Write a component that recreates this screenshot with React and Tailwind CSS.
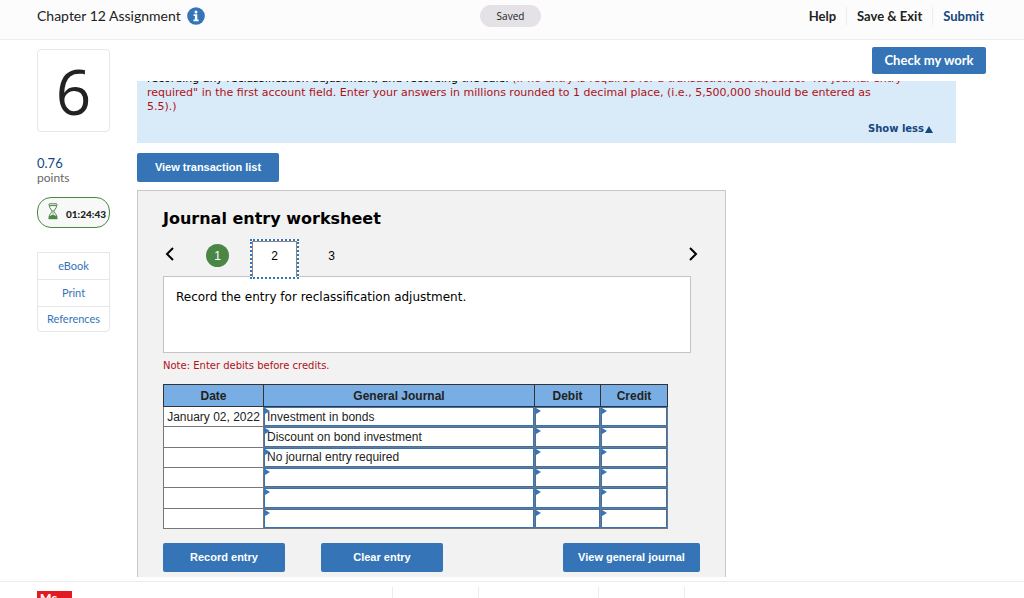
import React from "react";

const rows = [
  { date: "January 02, 2022", account: "Investment in bonds" },
  { date: "", account: "Discount on bond investment" },
  { date: "", account: "No journal entry required" },
  { date: "", account: "" },
  { date: "", account: "" },
  { date: "", account: "" },
];

const sans = "font-['Lato',sans-serif]";
const open = "font-['Open_Sans',sans-serif]";
const verdana = "font-['DejaVu_Sans',sans-serif]";
const arial = "font-['Liberation_Sans',sans-serif]";

function InfoIcon() {
  return (
    <svg viewBox="0 0 18 18" className="size-[18px]" aria-hidden="true">
      <circle cx="9" cy="9" r="8.8" fill="#3474b7" />
      <circle cx="9" cy="5" r="1.5" fill="#fff" />
      <path d="M6.6 7.3h3.7v5.2h1.3v1.7H6.5v-1.7h1.4V9H6.6z" fill="#fff" />
    </svg>
  );
}

function Hourglass() {
  return (
    <svg viewBox="0 0 10 17" className="h-[17px] w-[10px]" fill="none" stroke="#4a8745" aria-hidden="true">
      <rect x="0.8" y="0.8" width="8.4" height="1.8" rx="0.9" />
      <path d="M1.4 2.6c0 3 2.6 4.2 2.6 5.6S1.2 11 1 14.4M8.6 2.6c0 3-2.6 4.2-2.6 5.6s2.8 2.8 3 6.2" />
      <path d="M5 7v4" strokeWidth="0.7" />
      <path d="M0.8 13.4 5 11.4l4.2 2v2.6H0.8z" fill="#4a8745" stroke="none" />
      <path d="M0.5 15.7h9" />
    </svg>
  );
}

function Chevron({ d }) {
  return (
    <svg viewBox="0 0 9 14" className="h-[14px] w-[9px]" fill="none" stroke="#000" strokeWidth="2" aria-hidden="true">
      <path d={d} />
    </svg>
  );
}

function EntryCell({ label, value }) {
  return (
    <td className="relative border border-[#777] bg-white p-0 shadow-[inset_0_0_0_1px_#3474b7]">
      <svg viewBox="0 0 5 6" className="absolute left-px top-px h-[6px] w-[5px]" aria-hidden="true">
        <path d="M0 0l5 3-5 3z" fill="#3474b7" />
      </svg>
      <input
        aria-label={label}
        defaultValue={value}
        className="block h-4 w-full bg-transparent px-[3px] text-[12px] text-[#222] outline-none"
      />
    </td>
  );
}

function BlueButton({ children, className }) {
  return (
    <button className={`rounded-[2px] bg-[#3474b7] text-[11px] font-bold text-white ${arial} ${className}`}>
      {children}
    </button>
  );
}

export default function App() {
  return (
    <div className={`flex h-screen flex-col overflow-hidden bg-white text-[#222] ${sans}`}>
      <header className="grid h-10 shrink-0 grid-cols-[1fr_auto_1fr] items-center border-b border-[#ececec] bg-[#fcfcfc] pb-[7px] pl-[37px] pr-10">
        <div className="flex items-center gap-[6px]">
          <h1 className="text-[14px] leading-5">Chapter 12 Assignment</h1>
          <button aria-label="Assignment information">
            <InfoIcon />
          </button>
        </div>
        <span className={`rounded-full bg-[#e4e2e6] px-[17px] text-[10px] leading-[22px] ${open}`}>Saved</span>
        <nav className="flex items-center justify-end text-[13px] font-bold leading-[18px]">
          <a href="#help" className="border-r border-[#ececec] pr-[10px]">Help</a>
          <a href="#save" className="border-r border-[#ececec] px-[10px]">Save &amp; Exit</a>
          <a href="#submit" className="pl-[10px] text-[#16477f]">Submit</a>
        </nav>
      </header>

      <div className="flex min-h-0 flex-1 pl-[37px]">
        <aside className="w-[73px] shrink-0 pt-[9px]">
          <div className={`flex h-[83px] items-center justify-center rounded border border-[#e6e6e6] text-[62px] leading-none ${open}`}>6</div>
          <div className="pt-[23px] text-[13px] leading-4 text-[#16477f]">0.76</div>
          <div className="text-[12px] leading-[14px] text-[#666]">points</div>
          <div className="mt-3 flex h-[31px] items-center gap-2 rounded-[14px] border border-[#4a8745] bg-[#f7f8f7] pb-[2px] pl-[10px]">
            <Hourglass />
            <span className="pt-[5px] text-[10px] font-black">01:24:43</span>
          </div>
          <nav className="mt-6 rounded-b border border-[#e6e6e6] text-center text-[11px] text-[#3474b7]">
            <a href="#ebook" className="block border-b border-[#e6e6e6] leading-[26px]">eBook</a>
            <a href="#print" className="block border-b border-[#e6e6e6] leading-[26px]">Print</a>
            <a href="#references" className="block leading-[24px]">References</a>
          </nav>
        </aside>

        <main className="ml-[27px] flex min-w-0 flex-1 flex-col pb-1">
          <div className="flex h-[41px] shrink-0 justify-end pr-[38px] pt-[7px]">
            <button className="h-[27px] w-[114px] rounded-[2px] bg-[#3474b7] text-[13px] font-bold text-white">Check my work</button>
          </div>
          <div className="min-h-0 flex-1 overflow-hidden">
            <section className={`mr-[68px] overflow-hidden bg-[#d9eaf9] pl-[10px] pb-[7px] text-[11px] leading-[14px] ${verdana}`}>
              <p className="-mt-[9px] whitespace-nowrap text-[#b01116]">
                <span className="text-black">recording any reclassification adjustment, and recording the sale. </span>
                (If no entry is required for a transaction/event, select "No journal entry
                <br />
                required" in the first account field. Enter your answers in millions rounded to 1 decimal place, (i.e., 5,500,000 should be entered as
                <br />
                5.5).)
              </p>
              <div className="flex justify-end pr-[23px] pt-2">
                <button className="flex items-center gap-px text-[10px] font-bold text-[#16477f]">
                  Show less
                  <svg viewBox="0 0 8 7" className="h-[7px] w-2" aria-hidden="true">
                    <path d="M4 0l4 7H0z" fill="#16477f" />
                  </svg>
                </button>
              </div>
            </section>

            <BlueButton className="mt-[10px] h-[29px] w-[142px]">View transaction list</BlueButton>

            <section className="mt-[8px] w-[589px] max-w-full border border-[#c8c8c8] bg-[#f2f2f2] px-[25px] pb-10 pt-[18px]">
              <h2 className={`text-[16px] font-bold leading-5 text-black ${verdana}`}>Journal entry worksheet</h2>
              <div className="mr-[9px] mt-[10px] flex h-[37px] items-start text-[12px] text-black">
                <button aria-label="Previous entry" className="mt-[8px] ml-[2px]">
                  <Chevron d="M8 1 2 7l6 6" />
                </button>
                <button className={`ml-8 mt-[5px] size-[23px] rounded-full bg-[#4a8745] text-white ${arial}`}>1</button>
                <button className={`relative z-10 ml-[21px] h-10 w-[49px] border-2 border-dotted border-[#3474b7] bg-white pb-[6px] shadow-[inset_1px_1px_0_#888,inset_-1px_0_0_#888] ${arial}`}>2</button>
                <button className={`mt-[5px] h-[23px] w-[65px] ${arial}`}>3</button>
                <button aria-label="Next entry" className="ml-auto mt-[8px] mr-[-7px]">
                  <Chevron d="M1 1l6 6-6 6" />
                </button>
              </div>
              <div className={`mr-[9px] h-[77px] border border-[#c4c4c4] bg-white px-3 pt-3 text-[12px] leading-4 text-black ${verdana}`}>
                Record the entry for reclassification adjustment.
              </div>
              <p className={`mt-[6px] text-[10px] leading-[14px] text-[#b01116] ${verdana}`}>Note: Enter debits before credits.</p>
              <table className={`mt-[11px] h-[145px] w-[505px] table-fixed border-collapse text-[12px] text-[#222] ${arial}`}>
                <colgroup>
                  <col className="w-[100px]" />
                  <col className="w-[271px]" />
                  <col className="w-[66px]" />
                  <col className="w-[67px]" />
                </colgroup>
                <thead>
                  <tr className="h-[22px] bg-[#78aee3]">
                    {["Date", "General Journal", "Debit", "Credit"].map((name) => (
                      <th key={name} scope="col" className="border border-[#333] p-0 font-bold leading-4">{name}</th>
                    ))}
                  </tr>
                </thead>
                <tbody>
                  {rows.map((row, i) => (
                    <tr key={i}>
                      <td className="whitespace-nowrap border border-[#777] bg-white p-0 text-center leading-4">{row.date}</td>
                      <EntryCell label={`Account, row ${i + 1}`} value={row.account} />
                      <EntryCell label={`Debit, row ${i + 1}`} value="" />
                      <EntryCell label={`Credit, row ${i + 1}`} value="" />
                    </tr>
                  ))}
                </tbody>
              </table>
              <div className="mt-[14px] flex">
                <BlueButton className="h-[29px] w-[122px]">Record entry</BlueButton>
                <BlueButton className="ml-9 h-[29px] w-[122px]">Clear entry</BlueButton>
                <BlueButton className="ml-auto h-[29px] w-[137px]">View general journal</BlueButton>
              </div>
            </section>
          </div>
        </main>
      </div>

      <footer className="flex h-[17px] shrink-0 items-start overflow-hidden border-t border-[#ececec] pl-[37px]">
        <div className="w-[355px] shrink-0 pt-[9px]">
          <div className="h-9 w-[35px] bg-[#e21a23] pl-[3px] text-[12px] font-black leading-[14px] text-white">Mc</div>
        </div>
        <div className="mt-[5px] h-6 w-[86px] border-l border-[#ececec]" />
        <div className="mt-[5px] h-6 w-[120px] border-l border-[#ececec]" />
        <div className="mt-[5px] h-6 w-[87px] border-x border-[#ececec]" />
      </footer>
    </div>
  );
}
